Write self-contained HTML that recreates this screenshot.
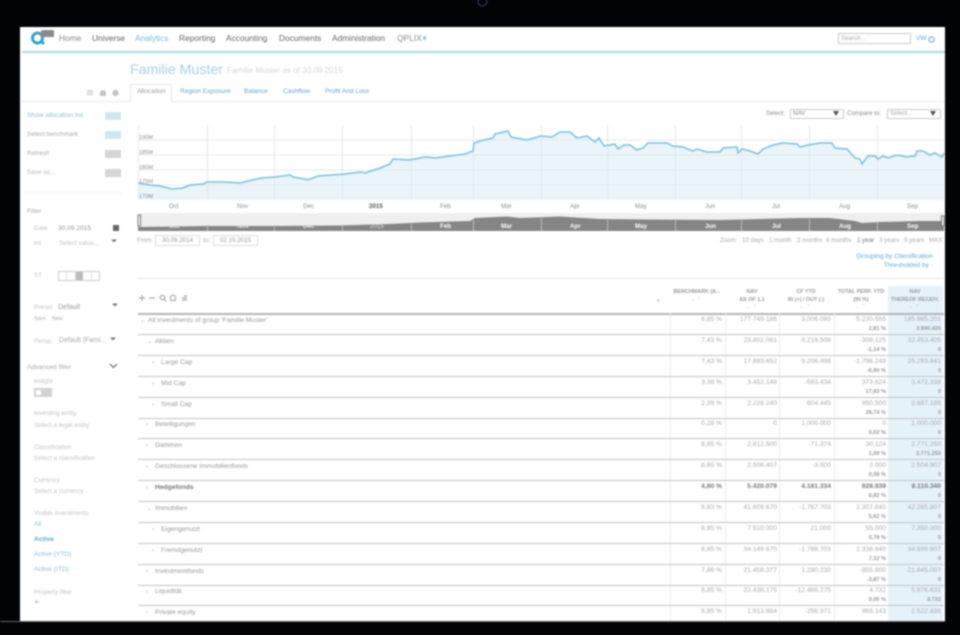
<!DOCTYPE html>
<html><head><meta charset="utf-8"><style>
html,body{margin:0;padding:0;background:#020307;width:960px;height:635px;overflow:hidden}
body{font-family:"Liberation Sans",sans-serif}
#w{position:absolute;left:0;top:0;width:960px;height:635px;filter:blur(.75px)}
.t,.b{position:absolute;white-space:nowrap;line-height:10px;font-size:6.5px;color:#bbb}
.t{margin-top:1px}
.b{background:#ccc}
.t.n{font-size:8.4px;color:#666;top:33px;margin-top:0}
.l{color:#c4c4c4;font-size:6.4px}
.v{color:#aaa;font-size:6.6px}
.bl{color:#5fabd0;font-size:6.6px}
.g{color:#8c8c8c;font-size:6.2px}
.w{color:#fff;font-size:6.2px;font-weight:bold}
.r{position:absolute;left:138px;width:806px;height:20px;border-bottom:1.2px solid #c4c4c4}
.r .c{position:absolute;top:1px;width:53px;text-align:right;font-size:6.7px;line-height:10px;color:#aaa;white-space:nowrap}
.r .s{top:10px;font-size:5.6px;color:#999;font-weight:bold}
.r .a{left:531px}.r .d{left:586px}.r .e{left:640px}.r .f{left:695px}.r .h{left:750px}
.r .m{position:absolute;top:2px;font-size:6.7px;line-height:10px;color:#999;white-space:nowrap}
.r .x{position:absolute;top:2px;font-size:6px;line-height:10px;color:#aaa}
.bd .c,.bd .m{color:#777;font-weight:bold}
.bd .s{color:#999}
.hd{position:absolute;width:54px;text-align:center;font-size:5.4px;line-height:7.5px;color:#999;white-space:nowrap;font-weight:bold}
.ar{color:#ccc;font-weight:normal;letter-spacing:2px}
.in{position:absolute;border:1px solid #ddd;box-sizing:border-box;background:#fff}
</style></head><body>
<div id="w">
<svg style="position:absolute;left:476px;top:-5px" width="14" height="14"><circle cx="6.5" cy="6.5" r="4.5" fill="none" stroke="#27405e" stroke-width="1.2"/></svg>
<div style="position:absolute;left:20px;top:27px;width:925px;height:594px;background:#fff;border-bottom:1px solid #777"></div>

<!-- top nav -->
<svg style="position:absolute;left:29px;top:28px" width="28" height="20"><circle cx="8.5" cy="10" r="5" fill="none" stroke="#35a3cf" stroke-width="3"/><circle cx="14" cy="15" r="1.6" fill="#35a3cf"/><rect x="12" y="2" width="13" height="7" rx="1" fill="#8a8a8a"/></svg>
<div class="t n" style="left:59px;color:#888">Home</div>
<div class="t n" style="left:92px">Universe</div>
<div class="t n" style="left:135px;color:#7db8d8">Analytics</div>
<div class="t n" style="left:179px">Reporting</div>
<div class="t n" style="left:226px">Accounting</div>
<div class="t n" style="left:279px">Documents</div>
<div class="t n" style="left:332px">Administration</div>
<div class="t n" style="left:397px;color:#888">QPLIX</div>
<div class="b" style="left:423px;top:36px;width:3px;height:4px;border-radius:2px;background:#8cc6df"></div>
<div class="in" style="left:838px;top:33px;width:73px;height:11px;border-color:#ccc"></div>
<div class="t g" style="left:841px;top:33px;color:#aaa">Search...</div>
<div class="t bl" style="left:916px;top:33px">VW</div>
<svg style="position:absolute;left:927px;top:35px" width="9" height="9"><circle cx="4.5" cy="4.5" r="2.6" fill="none" stroke="#6db4d6" stroke-width="1.2"/></svg>
<div class="b" style="left:22px;top:51px;width:923px;height:2px;background:#aad6e9"></div>

<!-- title -->
<div class="t" style="left:130px;top:60px;font-size:14.2px;line-height:18px;color:#a4d0e6">Familie Muster</div>
<div class="t" style="left:227px;top:65px;font-size:8.1px;line-height:10px;color:#d6d6d6">Familie Muster as of 30.09.2015</div>

<!-- tabs -->
<div class="b" style="left:22px;top:101px;width:923px;height:1px;background:#eaeaea"></div>
<div class="b" style="left:130px;top:84px;width:42px;height:18px;background:#fff;border:1px solid #e6e6e6;border-bottom:none;box-sizing:border-box"></div>
<div class="t g" style="left:137px;top:86px;font-size:6.6px;color:#999">Allocation</div>
<div class="t bl" style="left:180px;top:86px">Region Exposure</div>
<div class="t bl" style="left:244px;top:86px">Balance</div>
<div class="t bl" style="left:283px;top:86px">Cashflow</div>
<div class="t bl" style="left:325px;top:86px">Profit And Loss</div>
<svg style="position:absolute;left:86px;top:88px" width="36" height="10" fill="#c4c4c4"><rect x="1" y="2" width="6" height="1"/><rect x="1" y="4" width="6" height="1"/><rect x="1" y="6" width="6" height="1"/><circle cx="17" cy="5" r="3"/><rect x="14" y="5" width="6" height="3"/><circle cx="29.500" cy="5" r="3.200"/></svg>

<!-- sidebar actions -->
<div class="t bl" style="left:27px;top:110px;color:#8cc0da">Show allocation list</div>
<div class="t l" style="left:27px;top:129px;color:#aaa">Select benchmark</div>
<div class="t l" style="left:27px;top:148px;color:#aaa">Refresh</div>
<div class="t l" style="left:27px;top:167px;color:#bbb">Save as...</div>
<div class="b" style="left:105px;top:112px;width:16px;height:8px;background:#cde8f3"></div>
<div class="b" style="left:105px;top:131px;width:16px;height:8px;background:#cde8f3"></div>
<div class="b" style="left:105px;top:150px;width:16px;height:8px;background:#d6d6d6"></div>
<div class="b" style="left:105px;top:169px;width:16px;height:8px;background:#d6d6d6"></div>
<div class="b" style="left:24px;top:192px;width:98px;height:1px;background:#eee"></div>

<!-- filter -->
<div class="t l" style="left:27px;top:206px;color:#aaa">Filter</div>
<div class="t l" style="left:34px;top:223px">Date</div>
<div class="t v" style="left:58px;top:223px;color:#999">30.09.2015</div>
<div class="b" style="left:113px;top:225px;width:6px;height:6px;background:#666"></div>
<div class="t l" style="left:34px;top:238px">Int</div>
<div class="t l" style="left:59px;top:238px">Select value...</div>
<svg style="position:absolute;left:110px;top:238px" width="8" height="6"><path d="M1 1.500h6l-3 3z" fill="#777"/></svg>
<div class="t l" style="left:34px;top:270px">ST</div>
<div style="position:absolute;left:58px;top:271px;width:42px;height:10px;border:1px solid #ccc;box-sizing:border-box;display:flex">
<div style="flex:1;border-right:1px solid #ddd"></div><div style="flex:1;border-right:1px solid #ddd"></div><div style="flex:1;background:#bbb"></div><div style="flex:1;border-right:1px solid #ddd"></div><div style="flex:1"></div></div>
<div class="t l" style="left:34px;top:302px">Preset</div>
<div class="t v" style="left:58px;top:302px;color:#999;font-size:7px">Default</div>
<svg style="position:absolute;left:111px;top:302px" width="8" height="6"><path d="M1 1.500h6l-3 3z" fill="#777"/></svg>
<div class="t g" style="left:34px;top:313px;font-size:5.2px;color:#aaa">Save</div>
<div class="t g" style="left:52px;top:313px;font-size:5.2px;color:#aaa">New</div>
<div class="t l" style="left:34px;top:336px">Persp.</div>
<div class="t v" style="left:59px;top:335px;color:#aaa;font-size:6.9px">Default (Fami...</div>
<svg style="position:absolute;left:109px;top:336px" width="8" height="6"><path d="M1 1.500h6l-3 3z" fill="#777"/></svg>
<div class="t l" style="left:27px;top:362px;color:#aaa;font-size:6.7px">Advanced filter</div>
<svg style="position:absolute;left:109px;top:363px" width="9" height="6"><path d="M1 1l3.500 3.500L8 1" fill="none" stroke="#777" stroke-width="1.300"/></svg>
<div class="t l" style="left:34px;top:376px">Insight</div>
<div class="b" style="left:34px;top:388px;width:18px;height:9px;background:#d2d2d2"></div>
<div class="b" style="left:36px;top:390px;width:5px;height:5px;background:#fff"></div>
<div class="t l" style="left:34px;top:408px">Investing entity</div>
<div class="t l" style="left:34px;top:420px">Select a legal entity</div>
<div class="t l" style="left:34px;top:442px">Classification</div>
<div class="t l" style="left:34px;top:453px">Select a classification</div>
<div class="t l" style="left:34px;top:475px">Currency</div>
<div class="t l" style="left:34px;top:486px">Select a currency</div>
<div class="t l" style="left:34px;top:508px">Visible investments</div>
<div class="t bl" style="left:34px;top:519px;color:#8cc0da">All</div>
<div class="t bl" style="left:34px;top:534px;font-weight:bold;color:#5aa8cf">Active</div>
<div class="t bl" style="left:34px;top:549px;color:#8cc0da">Active (YTD)</div>
<div class="t bl" style="left:34px;top:564px;color:#8cc0da">Active (ITD)</div>
<div class="t l" style="left:34px;top:587px">Property filter</div>
<div class="t" style="left:34px;top:596px;color:#aaa;font-size:9px">+</div>

<!-- selects -->
<div class="t g" style="left:766px;top:108px">Select:</div>
<div class="in" style="left:790px;top:109px;width:54px;height:10px;border-color:#ccc"></div>
<div class="t g" style="left:793px;top:108px">NAV</div>
<svg style="position:absolute;left:832px;top:110px" width="8" height="7"><path d="M1 1h6L4 6z" fill="#555"/></svg>
<div class="t g" style="left:847px;top:108px">Compare to:</div>
<div class="in" style="left:887px;top:109px;width:54px;height:10px;border-color:#ccc"></div>
<div class="t g" style="left:890px;top:108px;color:#aaa">Select...</div>
<svg style="position:absolute;left:929px;top:110px" width="8" height="7"><path d="M1 1h6L4 6z" fill="#555"/></svg>

<!-- chart -->
<svg style="position:absolute;left:0;top:0" width="960" height="235">
<path fill="#eaf5fa" d="M138 183L150 185L160 186L172 189L183 188L190 185L203 184L207 182L225 182L240 183L252 180L262 178L275 177L290 175L293 177L305 179L308 180L318 176L345 174L360 172L365 173L380 168L390 164L393 159L410 160L425 157L435 158L450 156L465 154L473 151L474 143L480 141L493 138L495 134L508 131L511 137L527 140L541 136L552 137L560 132L570 132L577 138L587 136L595 142L599 138L604 146L615 144L618 149L624 145L630 145L637 150L643 148L648 143L667 143L673 146L683 147L693 151L697 149L707 152L720 152L723 148L737 147L738 153L742 149L750 151L758 154L763 149L773 145L783 143L797 144L800 147L808 145L820 143L832 143L835 148L847 149L855 158L860 159L862 164L868 156L875 156L878 159L883 156L888 158L897 155L907 157L915 156L917 151L923 151L930 155L935 153L942 157L944 153V200H138Z"/>
<g stroke="#e4e9ec" stroke-width="1" fill="none">
<path d="M138 140H944M138 155H944M138 170H944M138 185H944"/>
<path d="M138.500 125V200M207.500 125V200M274.500 125V200M342.500 125V200M411.500 125V200M473.500 125V200M541.500 125V200M607.500 125V200M675.500 125V200M741.500 125V200M809.500 125V200M877.500 125V200"/>
</g>
<path fill="none" stroke="#78c0de" stroke-width="1.500" d="M138 183L150 185L160 186L172 189L183 188L190 185L203 184L207 182L225 182L240 183L252 180L262 178L275 177L290 175L293 177L305 179L308 180L318 176L345 174L360 172L365 173L380 168L390 164L393 159L410 160L425 157L435 158L450 156L465 154L473 151L474 143L480 141L493 138L495 134L508 131L511 137L527 140L541 136L552 137L560 132L570 132L577 138L587 136L595 142L599 138L604 146L615 144L618 149L624 145L630 145L637 150L643 148L648 143L667 143L673 146L683 147L693 151L697 149L707 152L720 152L723 148L737 147L738 153L742 149L750 151L758 154L763 149L773 145L783 143L797 144L800 147L808 145L820 143L832 143L835 148L847 149L855 158L860 159L862 164L868 156L875 156L878 159L883 156L888 158L897 155L907 157L915 156L917 151L923 151L930 155L935 153L942 157L944 153"/>
<rect x="138" y="213" width="806" height="17.500" fill="#efefef"/>
<path fill="#858585" d="M138 227L207 226L270 226L340 225.500L390 224L420 222.500L470 221L475 218L507 216.500L520 218L560 216.500L600 219L650 219.500L720 220L800 218L830 218L855 221L862 223L880 222L920 221L944 221V231H138Z"/>
<path stroke="#bbb" stroke-width="1" d="M207.500 225V231M274.500 225V231M342.500 225V231M411.500 224V231M473.500 220V231M541.500 218V231M607.500 220V231M675.500 220V231M741.500 220V231M809.500 219V231M877.500 222V231"/>
<path fill="#fff" stroke="#555" stroke-width=".8" d="M138 215h2.500v11H138z"/>
<path fill="#fff" stroke="#555" stroke-width=".8" d="M941.500 216h2.500v10h-2.500z"/>
</svg>
<div class="t g" style="left:139px;top:132px;font-size:5.6px">190M</div>
<div class="t g" style="left:139px;top:147px;font-size:5.6px">185M</div>
<div class="t g" style="left:139px;top:162px;font-size:5.6px">180M</div>
<div class="t g" style="left:139px;top:176px;font-size:5.6px">175M</div>
<div class="t g" style="left:139px;top:191px;font-size:5.6px">170M</div>
<div class="t g" style="left:169px;top:201px">Oct</div>
<div class="t g" style="left:237px;top:201px">Nov</div>
<div class="t g" style="left:303px;top:201px">Dec</div>
<div class="t g" style="left:369px;top:201px;font-weight:bold;color:#555">2015</div>
<div class="t g" style="left:440px;top:201px">Feb</div>
<div class="t g" style="left:501px;top:201px">Mar</div>
<div class="t g" style="left:570px;top:201px">Apr</div>
<div class="t g" style="left:635px;top:201px">May</div>
<div class="t g" style="left:705px;top:201px">Jun</div>
<div class="t g" style="left:772px;top:201px">Jul</div>
<div class="t g" style="left:839px;top:201px">Aug</div>
<div class="t g" style="left:907px;top:201px">Sep</div>
<div class="t w" style="left:169px;top:221px;color:#e8e8e8">Oct</div>
<div class="t w" style="left:237px;top:221px;color:#e8e8e8">Nov</div>
<div class="t w" style="left:303px;top:221px;color:#e8e8e8">Dec</div>
<div class="t w" style="left:370px;top:221px;color:#e8e8e8;font-weight:normal">2015</div>
<div class="t w" style="left:440px;top:221px">Feb</div>
<div class="t w" style="left:501px;top:221px">Mar</div>
<div class="t w" style="left:570px;top:221px">Apr</div>
<div class="t w" style="left:635px;top:221px">May</div>
<div class="t w" style="left:705px;top:221px">Jun</div>
<div class="t w" style="left:772px;top:221px">Jul</div>
<div class="t w" style="left:839px;top:221px">Aug</div>
<div class="t w" style="left:907px;top:221px">Sep</div>

<!-- range -->
<div class="t g" style="left:137px;top:235px;color:#aaa">From:</div>
<div class="in" style="left:155px;top:235px;width:45px;height:11px"></div>
<div class="t g" style="left:162px;top:235px;color:#999">30.09.2014</div>
<div class="t g" style="left:203px;top:235px;color:#aaa">to:</div>
<div class="in" style="left:213px;top:235px;width:45px;height:11px"></div>
<div class="t g" style="left:220px;top:235px;color:#999">02.10.2015</div>
<div class="t g" style="left:720px;top:235px;color:#aaa">Zoom:</div>
<div class="t g" style="left:742px;top:235px;color:#aaa">10 days</div>
<div class="t g" style="left:769px;top:235px;color:#aaa">1 month</div>
<div class="t g" style="left:797px;top:235px;color:#aaa">3 months</div>
<div class="t g" style="left:826px;top:235px;color:#aaa">6 months</div>
<div class="t g" style="left:857px;top:235px;color:#777">1 year</div>
<div class="t g" style="left:879px;top:235px;color:#aaa">3 years</div>
<div class="t g" style="left:904px;top:235px;color:#aaa">5 years</div>
<div class="t g" style="left:929px;top:235px;color:#aaa">MAX</div>
<div class="t bl" style="right:27px;top:251px">Grouping by Classification</div>
<div class="t bl" style="right:27px;top:260px">Thresholded by -</div>
<div class="b" style="left:138px;top:278px;width:806px;height:1px;background:#e4e4e4"></div>

<!-- table header -->
<div class="b" style="left:888px;top:286px;width:55px;height:335px;background:#e5f3f9"></div>
<svg style="position:absolute;left:138px;top:293px" width="56" height="10" fill="none" stroke="#999" stroke-width="1"><path d="M1 5h6M4 2v6M11 5h6"/><circle cx="24.500" cy="4.500" r="2.300"/><path d="M26 6l2 2"/><circle cx="35" cy="5" r="2.800"/><path d="M44 7h5M44 5h5M46 3h3"/></svg>
<div class="t" style="left:656px;top:295px;color:#bbb;font-size:8px">+</div>
<div class="b" style="left:138px;top:313px;width:806px;height:1.500px;background:#b5b5b5"></div>
<div class="hd" style="left:670px;top:289px">BENCHMARK (A...<br><span class="ar">⌄⌃</span></div>
<div class="hd" style="left:725px;top:289px">NAV<br>AS OF 1.1<br><span class="ar">⌄⌃</span></div>
<div class="hd" style="left:779px;top:289px">CF YTD<br>IN (+) / OUT (-)<br><span class="ar">⌄⌃</span></div>
<div class="hd" style="left:834px;top:289px">TOTAL PERF. YTD<br>(IN %)<br><span class="ar">⌄⌃</span></div>
<div class="hd" style="left:888px;top:289px">NAV<br>THEREOF RECEIV.<br><span class="ar">⌄⌃</span></div>

<!-- table vertical lines -->
<svg style="position:absolute;left:0;top:0" width="960" height="635"><path stroke="#ececec" fill="none" d="M670.500 313V621M725.500 313V621M779.500 313V621M834.500 313V621"/></svg>

<!-- rows -->
<div class="r" style="top:314px"><span class="x" style="left:2px">⌄</span><span class="m" style="left:10px">All investments of group 'Familie Muster'</span><span class="c a">8,85 %</span><span class="c d">177.749.186</span><span class="c e">3.006.080</span><span class="c f">5.220.555</span><span class="c f s">2,81 %</span><span class="c h">185.985.201</span><span class="c h s">3.890.420</span></div>
<div class="r" style="top:335px"><span class="x" style="left:9px">⌄</span><span class="m" style="left:17px">Aktien</span><span class="c a">7,43 %</span><span class="c d">23.802.061</span><span class="c e">9.219.508</span><span class="c f">-308.125</span><span class="c f s">-1,14 %</span><span class="c h">32.453.405</span><span class="c h s">0</span></div>
<div class="r" style="top:356px"><span class="x" style="left:14px">›</span><span class="m" style="left:23px">Large Cap</span><span class="c a">7,43 %</span><span class="c d">17.883.652</span><span class="c e">9.208.498</span><span class="c f">-1.798.249</span><span class="c f s">-6,89 %</span><span class="c h">25.293.841</span><span class="c h s">0</span></div>
<div class="r" style="top:377px"><span class="x" style="left:14px">›</span><span class="m" style="left:23px">Mid Cap</span><span class="c a">3,38 %</span><span class="c d">3.452.148</span><span class="c e">-593.434</span><span class="c f">373.624</span><span class="c f s">17,83 %</span><span class="c h">3.472.338</span><span class="c h s">0</span></div>
<div class="r" style="top:398px"><span class="x" style="left:14px">›</span><span class="m" style="left:23px">Small Cap</span><span class="c a">2,39 %</span><span class="c d">2.226.240</span><span class="c e">604.445</span><span class="c f">850.500</span><span class="c f s">28,74 %</span><span class="c h">3.687.186</span><span class="c h s">0</span></div>
<div class="r" style="top:418px"><span class="x" style="left:8px">›</span><span class="m" style="left:17px">Beteiligungen</span><span class="c a">0,28 %</span><span class="c d">0</span><span class="c e">1.000.000</span><span class="c f">0</span><span class="c f s">0,02 %</span><span class="c h">1.000.000</span><span class="c h s">0</span></div>
<div class="r" style="top:439px"><span class="x" style="left:8px">›</span><span class="m" style="left:17px">Darlehen</span><span class="c a">8,85 %</span><span class="c d">2.812.500</span><span class="c e">-71.374</span><span class="c f">30.124</span><span class="c f s">1,09 %</span><span class="c h">2.771.250</span><span class="c h s">2.771.250</span></div>
<div class="r" style="top:460px"><span class="x" style="left:8px">›</span><span class="m" style="left:17px">Geschlossene Immobilienfonds</span><span class="c a">6,85 %</span><span class="c d">2.506.407</span><span class="c e">-3.500</span><span class="c f">2.000</span><span class="c f s">0,08 %</span><span class="c h">2.504.907</span><span class="c h s">0</span></div>
<div class="r bd" style="top:481px"><span class="x" style="left:8px">›</span><span class="m" style="left:17px">Hedgefonds</span><span class="c a">4,80 %</span><span class="c d">5.420.079</span><span class="c e">4.181.334</span><span class="c f">628.939</span><span class="c f s">6,82 %</span><span class="c h">8.110.340</span><span class="c h s">0</span></div>
<div class="r" style="top:502px"><span class="x" style="left:9px">⌄</span><span class="m" style="left:17px">Immobilien</span><span class="c a">8,83 %</span><span class="c d">41.609.670</span><span class="c e">-1.767.703</span><span class="c f">2.307.840</span><span class="c f s">5,62 %</span><span class="c h">42.285.807</span><span class="c h s">0</span></div>
<div class="r" style="top:523px"><span class="x" style="left:14px">›</span><span class="m" style="left:23px">Eigengenutzt</span><span class="c a">8,85 %</span><span class="c d">7.510.000</span><span class="c e">21.000</span><span class="c f">55.000</span><span class="c f s">0,78 %</span><span class="c h">7.350.000</span><span class="c h s">0</span></div>
<div class="r" style="top:544px"><span class="x" style="left:14px">›</span><span class="m" style="left:23px">Fremdgenutzt</span><span class="c a">8,85 %</span><span class="c d">34.149.670</span><span class="c e">-1.788.703</span><span class="c f">2.338.840</span><span class="c f s">7,12 %</span><span class="c h">34.899.807</span><span class="c h s">0</span></div>
<div class="r" style="top:565px"><span class="x" style="left:8px">›</span><span class="m" style="left:17px">Investmentfonds</span><span class="c a">7,86 %</span><span class="c d">21.458.377</span><span class="c e">1.280.230</span><span class="c f">-855.800</span><span class="c f s">-3,87 %</span><span class="c h">21.845.007</span><span class="c h s">0</span></div>
<div class="r" style="top:585px"><span class="x" style="left:8px">›</span><span class="m" style="left:17px">Liquidität</span><span class="c a">8,85 %</span><span class="c d">22.438.175</span><span class="c e">-12.466.275</span><span class="c f">4.732</span><span class="c f s">0,05 %</span><span class="c h">5.976.631</span><span class="c h s">4.732</span></div>
<div class="r" style="top:606px;border:none"><span class="x" style="left:8px">›</span><span class="m" style="left:17px">Private equity</span><span class="c a">8,85 %</span><span class="c d">1.913.664</span><span class="c e">-256.971</span><span class="c f">866.143</span><span class="c h">2.522.836</span></div>

<!-- crop anything below panel -->
<div class="b" style="left:0;top:621px;width:960px;height:14px;background:#020307;border-top:1px solid #666;box-sizing:border-box"></div>
<div class="b" style="left:945px;top:0;width:15px;height:635px;background:#020307"></div>
</div>
</body></html>
